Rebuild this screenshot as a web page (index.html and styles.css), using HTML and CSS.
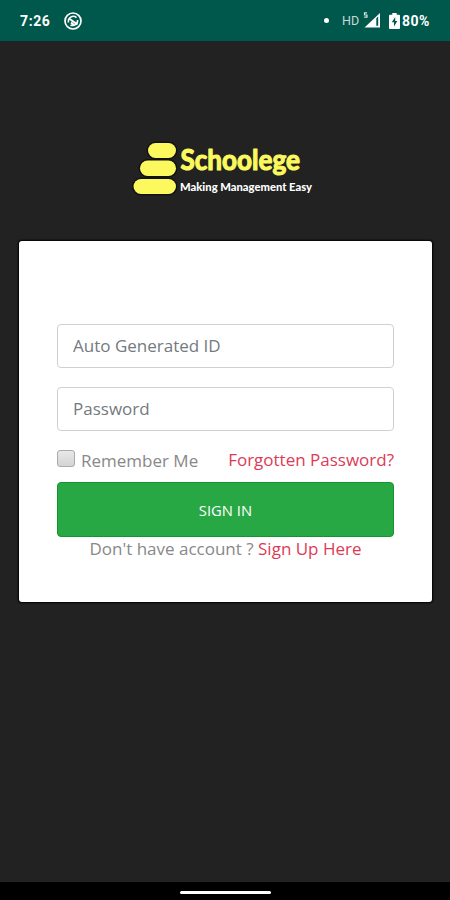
FILE: index.html
```
<!DOCTYPE html>
<html lang="en">
<head>
    <meta charset="UTF-8">
    <meta name="viewport" content="width=device-width, initial-scale=1.0">
    <title>Schoolege</title>
    <link rel="stylesheet" href="styles.css">
</head>
<body>

<header class="status-bar">
    <span class="time">7:26</span>
    <svg class="app-icon" width="18" height="18" viewBox="0 0 18 18" fill="none" stroke="#fff">
        <circle cx="9" cy="9" r="8" stroke-width="1.7"/>
        <path d="M4.5 10.5A5 5 0 0 1 12.5 5.5M13.6 8A5 5 0 0 1 6.5 13" stroke-width="1.6"/>
        <path d="M5 6.5L13.5 12.5M7 10.5L10 13" stroke-width="2"/>
    </svg>
    <span class="dot"></span>
    <span class="hd">HD</span>
    <svg class="signal" width="18" height="16" viewBox="0 0 18 16">
        <path d="M17 1V15.500H1.500Z" fill="#fff"/>
        <path d="M13.3 6.2L15.2 4.4V13.8H13.3Z" fill="#00574b"/>
        <path d="M4 .8H1.5V3H4V5.2H1.2" fill="none" stroke="#d5e5e2" stroke-width="1.2"/>
    </svg>
    <svg class="battery" width="11" height="16" viewBox="0 0 11 16">
        <path d="M3.3 0H7.7V1.7H10Q11 1.7 11 2.7V15Q11 16 10 16H1Q0 16 0 15V2.7Q0 1.7 1 1.7H3.3Z" fill="#fff"/>
        <path d="M6.2 4L2.8 9.2H5V13.4L8.3 8H6.2Z" fill="#00574b"/>
    </svg>
    <span class="percent">80%</span>
</header>

<main class="page">
    <svg class="logo" width="184" height="60" viewBox="0 0 184 60">
        <g class="logo-bars">
            <rect x="17" y="3" width="28" height="15" rx="7.5"/>
            <rect x="9" y="20.5" width="36" height="15.5" rx="7.7"/>
            <rect x="2.5" y="39" width="42.5" height="15" rx="7.5"/>
        </g>
        <text class="logo-name" x="49.5" y="29.5" textLength="119.5" lengthAdjust="spacingAndGlyphs">Schoolege</text>
        <text class="logo-tagline" x="49" y="50.5" textLength="132" lengthAdjust="spacingAndGlyphs">Making Management Easy</text>
    </svg>

    <form class="card">
        <input class="field" type="text" placeholder="Auto Generated ID">
        <input class="field" type="password" placeholder="Password">
        <div class="options">
            <label class="remember"><span class="checkbox"></span><span class="remember-text">Remember Me</span></label>
            <a class="link">Forgotten Password?</a>
        </div>
        <button class="btn" type="button">SIGN IN</button>
        <p class="signup">Don't have account ? <a class="link">Sign Up Here</a></p>
    </form>
</main>

<footer class="nav-bar"><span class="handle"></span></footer>

</body>
</html>
```
FILE: styles.css
```
* {
    box-sizing: border-box;
}

body {
    display: flex;
    flex-direction: column;
    height: 900px;
    margin: 0;
    overflow: hidden;
    background-color: #222;
    color: #888;
    font-family: "Open Sans", sans-serif;
}

.status-bar {
    display: flex;
    align-items: center;
    height: 41px;
    padding: 0 19px 0 20px;
    background-color: #00574b;
    color: #fff;
    font-family: Roboto, sans-serif;
}

.time {
    width: 44px;
    font-size: 14px;
    font-weight: 700;
    letter-spacing: 0.6px;
}

.dot {
    width: 5px;
    height: 5px;
    margin-left: 242px;
    border-radius: 50%;
    background-color: #fff;
}

.hd {
    width: 21px;
    margin-left: 13px;
    color: #c5dad6;
    font-size: 12.5px;
}

.signal {
    margin-top: -2px;
}

.battery {
    margin-left: 8px;
}

.percent {
    margin-left: 2px;
    font-size: 14px;
    font-weight: 700;
    letter-spacing: 0.5px;
}

.page {
    flex: 1;
    padding: 99px 18px 0 19px;
}

.logo {
    display: block;
    margin-left: 112px;
}

.logo-bars {
    fill: #fcf95f;
    stroke: #111;
    stroke-width: 3px;
    paint-order: stroke;
}

.logo-name,
.logo-tagline {
    font-family: Lato, sans-serif;
    stroke-linejoin: round;
}

.logo-name {
    fill: #fcf95f;
    stroke: #fcf95f;
    stroke-width: 1.2px;
    font-size: 29px;
    font-weight: 700;
}

.logo-tagline {
    fill: #fff;
    font-size: 11px;
    font-weight: 900;
}

.card {
    display: flex;
    flex-direction: column;
    height: 361px;
    margin-top: 41px;
    padding: 83px 38px 0;
    border-radius: 3px;
    background-color: #fff;
    box-shadow: 0 0 2px 1px #000;
}

.field {
    flex: none;
    width: 100%;
    height: 44px;
    margin: 0 0 19px;
    padding: 0 15px 1px;
    border: 1px solid #ced1d4;
    border-radius: 4px;
    font-family: inherit;
    font-size: 17px;
}

.field::placeholder {
    color: #747a80;
}

.options {
    display: flex;
    justify-content: space-between;
    height: 32px;
    font-size: 17px;
    line-height: 20px;
}

.remember {
    display: flex;
}

.remember-text {
    padding-top: 1px;
}

.checkbox {
    width: 18px;
    height: 17px;
    margin-right: 6px;
    border: 1px solid #aaa;
    border-radius: 3px;
    background: linear-gradient(#e8e8e8, #d4d4d4);
}

.link {
    color: #dc3b55;
}

.btn {
    height: 55px;
    border: 1px solid #14962f;
    border-radius: 4px;
    background-color: #28a745;
    color: #fff;
    font-family: inherit;
    font-size: 14.8px;
}

.signup {
    margin: 0;
    font-size: 17px;
    line-height: 23px;
    text-align: center;
}

.nav-bar {
    display: flex;
    justify-content: center;
    height: 18px;
    padding-top: 9px;
    background-color: #000;
}

.handle {
    width: 91px;
    height: 3px;
    border-radius: 2px;
    background-color: #fff;
}
```
